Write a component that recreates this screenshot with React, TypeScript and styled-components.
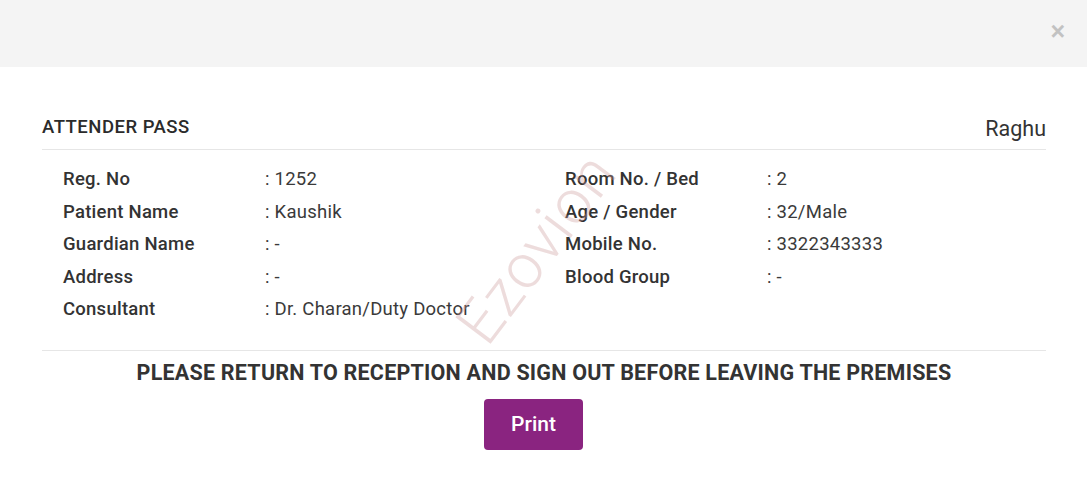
import React from "react";
import styled, { createGlobalStyle } from "styled-components";

const Global = createGlobalStyle`
  html, body { margin: 0; padding: 0; background: #fff; }
  body { font-family: Roboto, "Noto Sans", Arial, sans-serif; color: #333; }
`;

const Modal = styled.div`
  width: 1087px;
  height: 488px;
  background: #fff;
  position: relative;
  overflow: hidden;
`;

const Header = styled.div`
  height: 67px;
  background: #f4f4f4;
  display: flex;
  justify-content: flex-end;
  align-items: flex-start;
  padding: 0 22px 0 0;
  box-sizing: border-box;
`;

const Close = styled.button`
  border: none;
  background: none;
  padding: 0;
  margin-top: 19px;
  font-family: Arial, sans-serif;
  font-size: 25px;
  font-weight: 700;
  line-height: 24px;
  color: #c2c2c2;
  cursor: pointer;
`;

const Body = styled.div`
  padding: 0 41px 0 42px;
  position: relative;
`;

const TitleRow = styled.div`
  margin-top: 47px;
  display: flex;
  justify-content: space-between;
  align-items: center;
  height: 25px;
  padding-bottom: 10px;
  border-bottom: 1px solid #e6e6e6;
`;

const Title = styled.h4`
  margin: 0;
  font-size: 18.5px;
  font-weight: 500;
  color: #2b2b2b;
  letter-spacing: 0.5px;
`;

const Name = styled.span`
  font-size: 21.5px;
  color: #333;
  margin-top: 4px;
`;

const InfoGrid = styled.div`
  display: grid;
  grid-template-columns: 1fr 1fr;
  padding: 13px 0 24px;
  border-bottom: 1px solid #e6e6e6;
`;

const Column = styled.div`
  padding-left: 21px;
  display: flex;
  flex-direction: column;
`;

const Row = styled.div`
  display: grid;
  grid-template-columns: 202px 1fr;
  height: 32.5px;
  align-items: center;
  font-size: 18.5px;
  letter-spacing: 0.25px;
`;

const Label = styled.span`
  font-weight: 500;
  color: #333;
`;

const Value = styled.span`
  font-weight: 400;
  color: #3a3a3a;
  white-space: nowrap;
`;

const Notice = styled.p`
  margin: 10px 0 0;
  text-align: center;
  font-size: 21.5px;
  font-weight: 700;
  line-height: 24px;
  color: #333;
  letter-spacing: 0.22px;
`;

const Actions = styled.div`
  display: flex;
  justify-content: center;
  margin-top: 14px;
  padding-right: 21px;
`;

const PrintButton = styled.button`
  width: 99px;
  height: 51px;
  border: none;
  border-radius: 4px;
  background: #8a2480;
  color: #fff;
  font-family: Roboto, sans-serif;
  font-size: 21px;
  font-weight: 500;
  cursor: pointer;
`;

const Watermark = styled.div`
  position: absolute;
  left: 536px;
  top: 248px;
  transform: translate(-50%, -50%) rotate(-53deg);
  font-family: Roboto, sans-serif;
  font-size: 62px;
  font-weight: 300;
  letter-spacing: 1px;
  color: rgba(200, 150, 150, 0.33);
  pointer-events: none;
  white-space: nowrap;
`;

const left: [string, string][] = [
  ["Reg. No", ": 1252"],
  ["Patient Name", ": Kaushik"],
  ["Guardian Name", ": -"],
  ["Address", ": -"],
  ["Consultant", ": Dr. Charan/Duty Doctor"],
];

const right: [string, string][] = [
  ["Room No. / Bed", ": 2"],
  ["Age / Gender", ": 32/Male"],
  ["Mobile No.", ": 3322343333"],
  ["Blood Group", ": -"],
];

export default function App() {
  return (
    <>
      <Global />
      <Modal>
        <Header>
          <Close aria-label="Close">×</Close>
        </Header>
        <Body>
          <TitleRow>
            <Title>ATTENDER PASS</Title>
            <Name>Raghu</Name>
          </TitleRow>
          <InfoGrid>
            <Column>
              {left.map(([l, v]) => (
                <Row key={l}>
                  <Label>{l}</Label>
                  <Value>{v}</Value>
                </Row>
              ))}
            </Column>
            <Column>
              {right.map(([l, v]) => (
                <Row key={l}>
                  <Label>{l}</Label>
                  <Value>{v}</Value>
                </Row>
              ))}
            </Column>
          </InfoGrid>
          <Notice>PLEASE RETURN TO RECEPTION AND SIGN OUT BEFORE LEAVING THE PREMISES</Notice>
          <Actions>
            <PrintButton>Print</PrintButton>
          </Actions>
        </Body>
        <Watermark>Ezovion</Watermark>
      </Modal>
    </>
  );
}
